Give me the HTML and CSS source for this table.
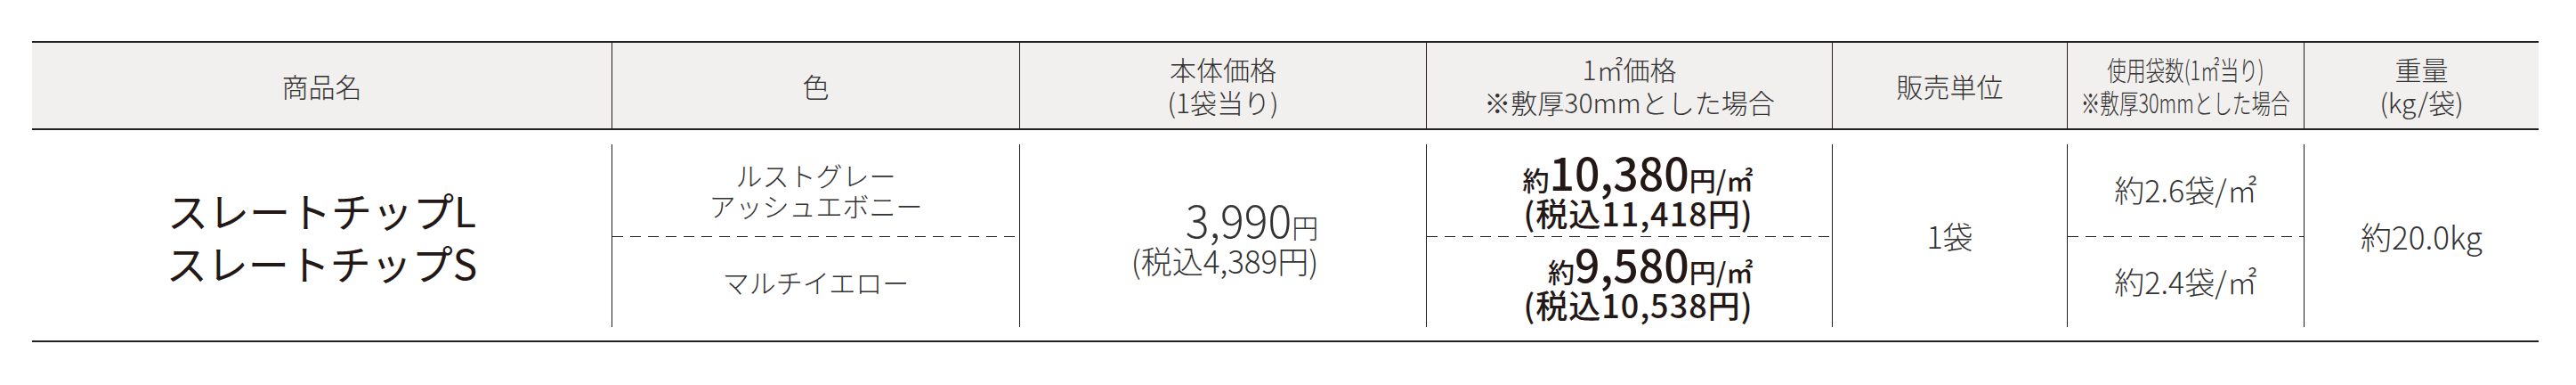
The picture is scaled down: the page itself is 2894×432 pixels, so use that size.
FILE: index.html
```html
<!DOCTYPE html>
<html lang="ja">
<head>
<meta charset="utf-8">
<title>スレートチップ 価格表</title>
<link rel="stylesheet" href="styles.css">
</head>
<body>
<div class="table">
  <div class="row head">
    <div class="cell"><span class="hl">商品名</span></div>
    <div class="cell"><span class="hl">色</span></div>
    <div class="cell"><span class="hl">本体価格</span><span class="hl">(1袋当り)</span></div>
    <div class="cell"><span class="hl">1㎡価格</span><span class="hl">※敷厚30mmとした場合</span></div>
    <div class="cell"><span class="hl">販売単位</span></div>
    <div class="cell"><span class="hl cond">使用袋数(1㎡当り)</span><span class="hl cond">※敷厚30mmとした場合</span></div>
    <div class="cell"><span class="hl">重量</span><span class="hl">(kg/袋)</span></div>
  </div>
  <div class="row body">
    <div class="cell name">
      <div class="center"><span class="nl">スレートチップL</span><span class="nl">スレートチップS</span></div>
    </div>
    <div class="cell light">
      <div class="half"><span class="cl">ルストグレー</span><span class="cl">アッシュエボニー</span></div>
      <div class="half dashed"><span class="cl">マルチイエロー</span></div>
    </div>
    <div class="cell light">
      <div class="center">
        <div class="price-block">
          <div class="pline"><span class="big">3,990</span><span class="unit">円</span></div>
          <div class="tax">(税込4,389円)</div>
        </div>
      </div>
    </div>
    <div class="cell dark">
      <div class="half">
        <div class="sqm-block">
          <div class="pline"><span class="unit">約</span><span class="big">10,380</span><span class="unit">円/㎡</span></div>
          <div class="tax">(税込11,418円)</div>
        </div>
      </div>
      <div class="half dashed">
        <div class="sqm-block">
          <div class="pline"><span class="unit">約</span><span class="big">9,580</span><span class="unit">円/㎡</span></div>
          <div class="tax">(税込10,538円)</div>
        </div>
      </div>
    </div>
    <div class="cell light mid">
      <div class="center"><span>1袋</span></div>
    </div>
    <div class="cell light mid">
      <div class="half"><span>約2.6袋/㎡</span></div>
      <div class="half dashed"><span>約2.4袋/㎡</span></div>
    </div>
    <div class="cell light mid">
      <div class="center"><span class="wt">約20.0kg</span></div>
    </div>
  </div>
</div>
</body>
</html>
```

FILE: styles.css
```css
html, body {
  margin: 0;
  padding: 0;
  background: #ffffff;
}

body {
  font-family: "Noto Sans CJK JP", "Noto Sans", sans-serif;
  color: #333333;
}

.table {
  margin: 46px 0 0 36px;
  width: 2816px;
  border-top: 2px solid #231f20;
  border-bottom: 2px solid #231f20;
}

.row {
  display: grid;
  grid-template-columns: 651px 458px 457px 456px 264px 266px 264px;
}

.cell + .cell {
  border-left: 1px solid #231f20;
}

/* header */
.head {
  background: #f2f0ee;
  height: 96px;
  border-bottom: 2px solid #231f20;
}

.head .cell {
  display: flex;
  flex-direction: column;
  align-items: center;
  justify-content: center;
  font-size: 30px;
  line-height: 37px;
  font-weight: 300;
  white-space: nowrap;
  color: #333333;
}

.hl {
  display: block;
  height: 37px;
}

.head .cond {
  transform: scaleX(0.72);
  transform-origin: center;
}

/* body */
.body {
  padding: 16px 0 15px;
}

.body .cell {
  height: 205px;
  display: flex;
  flex-direction: column;
  white-space: nowrap;
}

.center,
.half {
  flex: 1;
  display: flex;
  flex-direction: column;
  align-items: center;
  justify-content: center;
}

.dashed {
  background-image: linear-gradient(to right, #231f20 0 12px, transparent 12px 20px);
  background-size: 20px 1px;
  background-repeat: repeat-x;
  background-position: left top;
}

.name {
  font-size: 46px;
  line-height: 59px;
  font-weight: 400;
  color: #231815;
}

.nl {
  display: block;
  height: 59px;
}

.light {
  font-size: 30px;
  line-height: 34px;
  font-weight: 300;
  color: #333333;
}

.cl {
  display: block;
  height: 34px;
}

.mid {
  font-size: 34px;
}

.wt {
  font-size: 35px;
}

.price-block {
  text-align: right;
  padding-left: 4px;
  margin-top: 6px;
}

.pline {
  height: 49px;
  line-height: 49px;
}

.big {
  font-size: 50px;
}

.unit {
  font-size: 30px;
}

.tax {
  font-size: 35px;
  line-height: 44px;
  height: 44px;
}

.dark {
  font-weight: 500;
  color: #231815;
}

.sqm-block {
  width: 278px;
  text-align: right;
  margin-top: 2px;
}

.sqm-block .pline {
  height: 48px;
  line-height: 48px;
}

.sqm-block .tax {
  font-size: 36px;
  letter-spacing: 1px;
  line-height: 44px;
  height: 44px;
}
```
